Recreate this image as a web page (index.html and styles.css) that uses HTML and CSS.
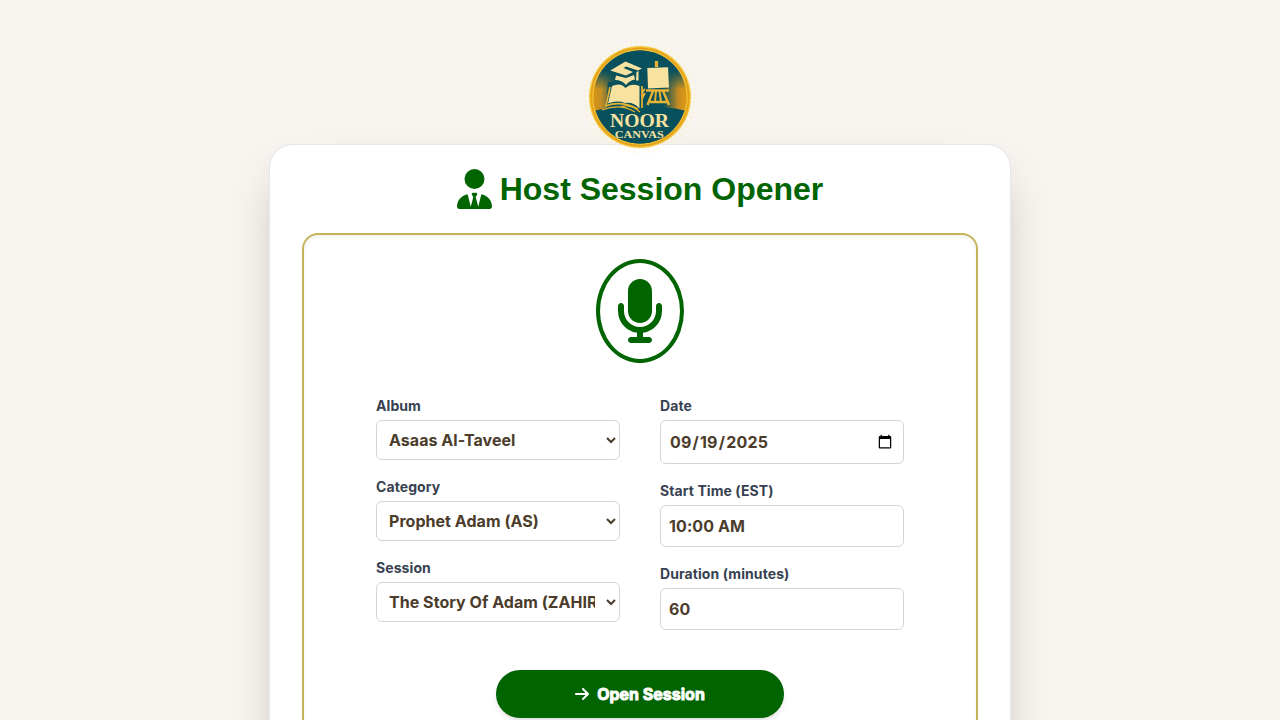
FILE: index.html
```html
<!DOCTYPE html>
<html lang="en">
<head>
<meta charset="utf-8">
<title>Host Session Opener</title>
<link rel="stylesheet" href="styles.css">
</head>
<body>
<main class="page">
  <svg class="logo" viewBox="0 0 120 120" role="img" aria-label="Noor Canvas">
    <defs>
      <linearGradient id="glow" x1="0" x2="1" y1="0" y2="0">
        <stop offset="0" stop-color="#d99413"/><stop offset=".09" stop-color="#c18e25"/><stop offset=".25" stop-color="#07505c"/>
        <stop offset=".75" stop-color="#07505c"/><stop offset=".91" stop-color="#c58d20"/><stop offset="1" stop-color="#e09b16"/>
      </linearGradient>
      <linearGradient id="fade" x1="0" x2="0" y1="0" y2="1">
        <stop offset="0" stop-color="#07505c"/><stop offset=".22" stop-color="#07505c"/><stop offset=".42" stop-color="#07505c" stop-opacity="0"/>
      </linearGradient>
      <clipPath id="disc"><circle cx="60" cy="60" r="46.500"/></clipPath>
    </defs>
    <circle class="rays" cx="60" cy="60" r="54"/>
    <circle cx="60" cy="60" r="51" fill="#f3c63a"/>
    <circle cx="60" cy="60" r="48.600" fill="none" stroke="#e3a11a" stroke-width="1.800"/>
    <circle cx="60" cy="60" r="47.200" fill="#f0bd36"/>
    <g clip-path="url(#disc)">
      <path fill="url(#glow)" d="M13 13h94v94H13z"/>
      <path fill="url(#fade)" d="M13 13h94v94H13z"/>
      <path fill="#07505c" d="M13 74Q36 67 60 74Q84 67 107 74V108H13z"/>
    </g>
    <path fill="#07505c" d="M28 45H64V72H26z"/>
    <g fill="#f8e2a0">
      <path d="M30.300 33.500L45.500 24.500 62 31.500 58 33.500 46 29.500 43.500 31 53 35 46 38.500z"/>
      <path d="M36 38.500L46 41 54 38 55 42.500Q50 43 46 48Q42 43 35 43zM56.500 35L58.500 34V43.500H56z"/>
      <path d="M32 49Q41 45 45.500 51Q51 45.500 59.500 49V71.500Q54 65 45 66Q37 63 28 66.500z"/>
      <path d="M67.300 31L88 30.300 89 50.500 68 51.500z"/>
    </g>
    <g fill="none" stroke="#e9b433">
      <path stroke-width="3.300" d="M76.500 30V24"/>
      <path stroke-width="2.400" d="M66 53.500H89M73 54L67.500 68M83 54L89 68M70 65H87"/>
      <path stroke-width="2" d="M76 54L75 65M79.500 54L81 65"/>
      <path stroke-width="1.700" d="M30 50L26 69Q40 63 58 72M62 49V71M65 52Q61 55 63 60L65 56"/>
      <path stroke-width="1.200" d="M22 73Q40 66 55 75M40 70Q51 66 60 75"/>
    </g>
    <text class="logo-name" x="59.500" y="90" text-anchor="middle" textLength="59" lengthAdjust="spacingAndGlyphs">NOOR</text>
    <text class="logo-sub" x="59.300" y="101" text-anchor="middle" textLength="49" lengthAdjust="spacingAndGlyphs">CANVAS</text>
  </svg>
  <section class="card">
    <h1 class="title">
      <svg class="title-icon" viewBox="0 0 448 512"><path d="M96 128a128 128 0 1 0 256 0A128 128 0 1 0 96 128zm94.500 200.200l18.600 31L175.800 483.100l-36-146.900c-2-8.100-9.800-13.400-17.900-11.300C51.900 342.400 0 405.800 0 481.300c0 17 13.800 30.700 30.700 30.700H417.300c17 0 30.700-13.800 30.700-30.700c0-75.500-51.900-138.900-121.900-156.400c-8.100-2-15.900 3.300-17.900 11.300l-36 146.900L238.900 359.200l18.600-31c6.400-10.700-1.300-24.200-13.700-24.200H204.300c-12.400 0-20.100 13.600-13.700 24.200z"/></svg>
      <span>Host Session Opener</span>
    </h1>
    <form class="panel">
      <div class="mic">
        <svg class="mic-icon" viewBox="0 0 384 512"><path d="M192 0C139 0 96 43 96 96V256c0 53 43 96 96 96s96-43 96-96V96c0-53-43-96-96-96zM64 216c0-13.300-10.700-24-24-24s-24 10.700-24 24v40c0 89.100 66.200 162.700 152 174.400V464H120c-13.300 0-24 10.700-24 24s10.700 24 24 24H264c13.300 0 24-10.700 24-24s-10.700-24-24-24H216V430.400c85.800-11.700 152-85.300 152-174.400V216c0-13.300-10.700-24-24-24s-24 10.700-24 24v40c0 70.700-57.300 128-128 128s-128-57.300-128-128V216z"/></svg>
      </div>
      <div class="fields">
        <div class="column">
          <div class="field"><label for="album">Album</label><select id="album" class="control select"><option>Asaas Al-Taveel</option></select></div>
          <div class="field"><label for="category">Category</label><select id="category" class="control select"><option>Prophet Adam (AS)</option></select></div>
          <div class="field"><label for="session">Session</label><select id="session" class="control select"><option>The Story Of Adam (ZAHIR)</option></select></div>
        </div>
        <div class="column">
          <div class="field"><label for="date">Date</label><input id="date" class="control date" type="date" value="2025-09-19"></div>
          <div class="field"><label for="time">Start Time (EST)</label><input id="time" class="control" type="text" value="10:00 AM"></div>
          <div class="field"><label for="duration">Duration (minutes)</label><input id="duration" class="control" type="text" value="60"></div>
        </div>
      </div>
      <button class="open" type="button">
        <svg class="open-icon" viewBox="0 0 448 512"><path d="M438.600 278.600c12.500-12.500 12.500-32.800 0-45.300l-160-160c-12.500-12.500-32.800-12.500-45.300 0s-12.500 32.800 0 45.300L338.800 224 32 224c-17.700 0-32 14.300-32 32s14.300 32 32 32l306.700 0L233.400 393.400c-12.500 12.500-12.500 32.800 0 45.300s32.800 12.500 45.300 0l160-160z"/></svg>
        <span class="open-label">Open Session</span>
      </button>
    </form>
  </section>
</main>
</body>
</html>
```
FILE: styles.css
```css
* { box-sizing: border-box; }
body {
  margin: 0;
  height: 720px;
  overflow: hidden;
  background: #f8f5f0;
  font-family: Inter, "Liberation Sans", sans-serif;
}
.page {
  display: flex;
  flex-direction: column;
  align-items: center;
  height: 720px;
  padding-top: 37px;
  overflow: hidden;
}
.logo { position: relative; z-index: 1; width: 120px; height: 120px; margin-bottom: -13px; flex: none; }
.rays { fill: none; stroke: #fae9b0; stroke-width: 7; stroke-dasharray: 1 4; opacity: .4; }
.logo-name { fill: #f8e2a0; font: bold 19.3px "Liberation Serif", serif; }
.logo-sub { fill: #f8e2a0; font: bold 10.8px "Liberation Serif", serif; }
.card {
  width: 742px;
  height: 720px;
  flex: none;
  padding: 24px 32px 32px;
  background: #fff;
  border: 1px solid #e5e7eb;
  border-radius: 24px;
  box-shadow: 0 25px 50px -12px rgba(0, 0, 0, .25);
}
.title {
  display: flex;
  align-items: center;
  justify-content: center;
  gap: 8px;
  height: 40px;
  margin: 0 0 24px;
  color: #006400;
  font: bold 32px/40px "Liberation Sans", Arial, sans-serif;
}
.title-icon { width: 35px; height: 40px; fill: currentColor; }
.panel {
  display: flex;
  flex-direction: column;
  align-items: center;
  height: 600px;
  padding-top: 24px;
  border: 2px solid #c5b358;
  border-radius: 16px;
  box-shadow: inset 0 2px 4px rgba(0, 0, 0, .06);
}
.mic { width: 88px; height: 104px; padding: 16px; border: 4px solid #006400; border-radius: 50%; }
.mic-icon { display: block; width: 48px; height: 64px; fill: #006400; }
.fields { display: grid; grid-template-columns: 244px 244px; gap: 40px; margin-top: 32px; }
.column { display: flex; flex-direction: column; gap: 16px; }
.field { display: flex; flex-direction: column; gap: 4px; }
label { color: #374151; font-size: 14px; font-weight: 700; line-height: 21px; letter-spacing: .08px; }
.control {
  width: 100%;
  height: 42px;
  margin: 0;
  padding: 8px;
  border: 1px solid #d1d5db;
  border-radius: 6px;
  background: #fff;
  color: #4b3c2b;
  font: 700 16px Inter, "Liberation Sans", sans-serif;
  letter-spacing: .1px;
}
.select { height: 40px; letter-spacing: .04px; }
.date { height: 44px; letter-spacing: .2px; }
.open {
  display: flex;
  align-items: center;
  justify-content: center;
  gap: 8px;
  width: 288px;
  height: 48px;
  margin-top: 40px;
  border: 0;
  border-radius: 24px;
  background: #006400;
  color: #fff;
  font: 700 16px Inter, "Liberation Sans", sans-serif;
  box-shadow: 0 4px 6px -1px rgba(0, 0, 0, .1), 0 2px 4px -2px rgba(0, 0, 0, .1);
}
.open-label { -webkit-text-stroke: .9px #fff; }
.open-icon { width: 14px; height: 16px; fill: currentColor; }
```
